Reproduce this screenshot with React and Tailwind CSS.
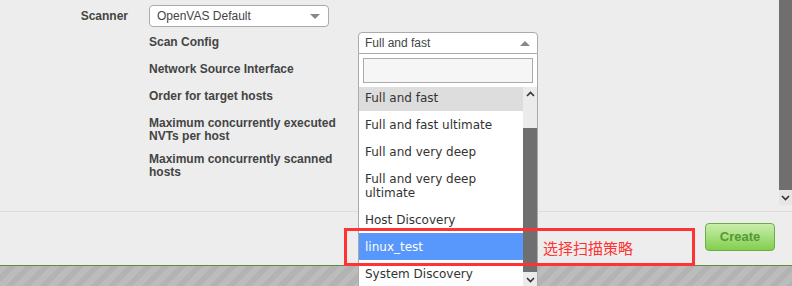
import React from "react";

const options = [
  { label: "Full and fast", state: "hover" },
  { label: "Full and fast ultimate" },
  { label: "Full and very deep" },
  { label: "Full and very deep ultimate" },
  { label: "Host Discovery" },
  { label: "linux_test", state: "selected" },
  { label: "System Discovery" },
];

const rows = [
  { label: "Scan Config", h: "h-[27px]" },
  { label: "Network Source Interface", h: "h-[27px]" },
  { label: "Order for target hosts", h: "h-[27px]" },
  { label: "Maximum concurrently executed NVTs per host", h: "h-[36px]" },
  { label: "Maximum concurrently scanned hosts", h: "h-[36px]" },
];

function Chevron({ up }) {
  return (
    <svg width="9" height="6" viewBox="0 0 9 6" className="block">
      <polyline
        points={up ? "1,5 4.5,1.5 8,5" : "1,1 4.5,4.5 8,1"}
        fill="none"
        stroke="#333"
        strokeWidth="1.6"
      />
    </svg>
  );
}

export default function App() {
  return (
    <div className="relative w-[792px] h-[286px] overflow-hidden bg-[#ededed] font-['Liberation_Sans',Arial,sans-serif] text-[#444]">
      <div className="flex flex-col h-full">
        {/* Form area */}
        <div className="flex h-[212px] border-b border-[#dcdcdc] shrink-0">
          <div className="flex-1 pt-[5px]">
            <div className="flex items-center h-[22px]">
              <div className="w-[149px] pr-[21px] text-right text-[12px] font-bold">
                Scanner
              </div>
              <div className="flex items-center justify-between w-[180px] h-[22px] px-[7px] bg-white border border-[#aaa] rounded-[4px] text-[12px]">
                <span>OpenVAS Default</span>
                <span className="w-0 h-0 border-x-[5px] border-x-transparent border-t-[5px] border-t-[#888] mr-[1px]" />
              </div>
            </div>
            <div className="mt-[5px] pl-[149px]">
              {rows.map((r) => (
                <div key={r.label} className={`${r.h} pt-[4px]`}>
                  <div className="w-[200px] text-[12px] leading-[13px] font-bold">
                    {r.label}
                  </div>
                </div>
              ))}
            </div>
          </div>
          {/* page scrollbar */}
          <div className="w-[13px] h-[205px] flex flex-col bg-[#e6e6e6]">
            <div className="h-[190px] bg-[#6f6f6f]" />
            <div className="flex-1 flex items-center justify-center">
              <Chevron />
            </div>
          </div>
        </div>

        {/* Actions */}
        <div className="h-[53px] shrink-0 flex justify-end pt-[11px] pr-[17px]">
          <button className="w-[70px] h-[28px] rounded-[4px] border border-[#6aae48] bg-gradient-to-b from-[#c9eeaa] to-[#82cf4c] text-[13px] font-bold text-[#559935]">
            Create
          </button>
        </div>
        <div className="h-px bg-[#5b8d3b] shrink-0" />
        <div className="flex-1 bg-[repeating-linear-gradient(135deg,#bcbcbc_0,#bcbcbc_6px,#b3b3b3_6px,#b3b3b3_12px)]" />
      </div>

      {/* Open select dropdown */}
      <div className="absolute left-[358px] top-[32px] w-[180px]">
        <div className="flex items-center justify-between h-[22px] px-[6px] bg-white border border-[#aaa] rounded-t-[4px] text-[12px]">
          <span>Full and fast</span>
          <span className="w-0 h-0 border-x-[5px] border-x-transparent border-b-[5px] border-b-[#888] mr-[1px]" />
        </div>
        <div className="bg-white border-x border-[#aaa]">
          <div className="p-[4px]">
            <div className="h-[25px] bg-[#f6f6f6] border border-[#aaa]" />
          </div>
          <div className="flex h-[200px] overflow-hidden">
            <div className="flex-1 font-['DejaVu_Sans',sans-serif] text-[12px] leading-[14px] text-[#333]">
              <div className="-mt-[3px]">
                {options.map((o) => (
                  <div
                    key={o.label}
                    className={
                      o.state === "hover"
                        ? "px-[6px] py-[6.5px] bg-[#dddddd]"
                        : o.state === "selected"
                        ? "px-[6px] py-[6.5px] bg-[#5897fb] text-white"
                        : "px-[6px] py-[6.5px]"
                    }
                  >
                    {o.label}
                  </div>
                ))}
              </div>
            </div>
            <div className="w-[14px] flex flex-col bg-[#ebebeb]">
              <div className="h-[14px] flex items-center justify-center">
                <Chevron up />
              </div>
              <div className="h-[27px]" />
              <div className="h-[144px] bg-[#6f6f6f]" />
              <div className="h-[15px] flex items-center justify-center">
                <Chevron />
              </div>
            </div>
          </div>
        </div>
      </div>

      {/* Annotation */}
      <div className="absolute left-[344px] top-[228px] w-[351px] h-[38px] border-[3px] border-[#f33] flex items-center pl-[196px]">
        <span className="text-[15px] text-[#f33] font-['Noto_Sans_CJK_SC',sans-serif] leading-none">
          选择扫描策略
        </span>
      </div>
    </div>
  );
}
